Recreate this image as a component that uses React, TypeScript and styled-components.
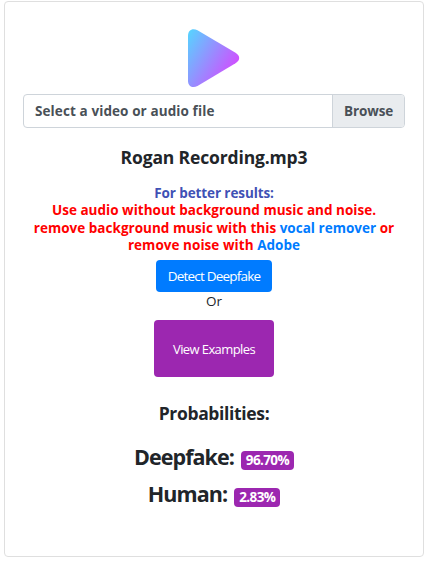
import React from "react";
import styled, { createGlobalStyle } from "styled-components";

const GlobalStyle = createGlobalStyle`
  *, *::before, *::after { box-sizing: border-box; }
  body {
    margin: 0;
    background: #fff;
    color: #212529;
    font-family: "Open Sans", "Noto Sans", sans-serif;
  }
`;

const Card = styled.main`
  width: 420px;
  height: 556px;
  margin: 1px 0 0 4px;
  padding: 27px 18px 0;
  border: 1px solid #dfdfdf;
  border-radius: 4px;
  display: flex;
  flex-direction: column;
  align-items: center;
  white-space: nowrap;
`;

const Logo = styled.svg`
  display: block;
  width: 52px;
  height: 59px;
  flex: none;
`;

const FilePicker = styled.label`
  display: flex;
  width: 382px;
  height: 34px;
  margin-top: 6px;
  border: 1px solid #ced4da;
  border-radius: 4px;
  overflow: hidden;
  color: #495057;
  font-size: 13.5px;
  font-weight: 700;
  line-height: 33px;
  letter-spacing: 0.1px;
`;

const FileName = styled.span`
  flex: 1;
  padding-left: 11px;
`;

const Browse = styled.span`
  width: 72px;
  padding-left: 11px;
  border-left: 1px solid #ced4da;
  background: #e9ecef;
  letter-spacing: -0.1px;
`;

const Title = styled.h2<{ $top: number; $spacing: number }>`
  margin: ${(p) => p.$top}px 0 0;
  font-size: 17.5px;
  font-weight: 700;
  line-height: 24px;
  letter-spacing: ${(p) => p.$spacing}px;
`;

const Tips = styled.div`
  margin-top: 16px;
  display: flex;
  flex-direction: column;
  align-items: center;
  color: #f00;
  font-size: 13.5px;
  font-weight: 700;
  line-height: 17.4px;
`;

const Tip = styled.span<{ $spacing: number }>`
  letter-spacing: ${(p) => p.$spacing}px;
`;

const TipHeading = styled(Tip)`
  color: #3f51b5;
`;

const Link = styled.a`
  color: #007bff;
  text-decoration: none;
`;

const Button = styled.button`
  display: flex;
  align-items: center;
  justify-content: center;
  flex: none;
  padding: 0;
  border: 0;
  border-radius: 4px;
  color: #fff;
  font: 400 13.5px "Open Sans", "Noto Sans", sans-serif;
`;

const DetectButton = styled(Button)`
  width: 116px;
  height: 32px;
  margin-top: 5.4px;
  background: #007bff;
  letter-spacing: -0.8px;
`;

const ExamplesButton = styled(Button)`
  width: 120px;
  height: 57px;
  margin-top: 9px;
  background: #9c27b0;
  font-size: 13px;
  letter-spacing: -0.6px;
`;

const Or = styled.span`
  font-size: 13.5px;
  line-height: 19px;
`;

const Result = styled.div<{ $top: number }>`
  display: flex;
  align-items: center;
  gap: 7px;
  height: 30px;
  margin-top: ${(p) => p.$top}px;
`;

const ResultLabel = styled.span<{ $spacing: number }>`
  font-size: 21.5px;
  font-weight: 700;
  line-height: 30px;
  letter-spacing: ${(p) => p.$spacing}px;
`;

const Badge = styled.span<{ $width: number }>`
  width: ${(p) => p.$width}px;
  height: 19px;
  margin-top: 6px;
  border-radius: 4px;
  background: #9c27b0;
  color: #fff;
  font-size: 13.5px;
  font-weight: 700;
  line-height: 19px;
  letter-spacing: -0.6px;
  text-align: center;
`;

export default function App() {
  return (
    <>
      <GlobalStyle />
      <Card>
        <Logo viewBox="0 0 52 59">
          <defs>
            <linearGradient id="play" gradientUnits="userSpaceOnUse" x1="0" y1="6" x2="49" y2="35">
              <stop offset="0" stopColor="#5ad0ff" />
              <stop offset="1" stopColor="#cf50ff" />
            </linearGradient>
          </defs>
          <path
            d="M0 6.5 C0 1 4.5 -1.4 9.5 1.2 L47.5 23.8 C52.4 26.8 52.4 31.2 47.5 34.3 L9.5 57 C4.5 59.8 0 57 0 51.7 Z"
            fill="url(#play)"
          />
        </Logo>
        <FilePicker>
          <FileName>Select a video or audio file</FileName>
          <Browse>Browse</Browse>
        </FilePicker>
        <Title $top={17} $spacing={-0.15}>Rogan Recording.mp3</Title>
        <Tips>
          <TipHeading $spacing={-0.1}>For better results:</TipHeading>
          <Tip $spacing={0.02}>Use audio without background music and noise.</Tip>
          <Tip $spacing={0.02}>
            remove background music with this <Link>vocal remover</Link> or
          </Tip>
          <Tip $spacing={0.05}>
            remove noise with <Link>Adobe</Link>
          </Tip>
        </Tips>
        <DetectButton>Detect Deepfake</DetectButton>
        <Or>Or</Or>
        <ExamplesButton>View Examples</ExamplesButton>
        <Title $top={24} $spacing={-0.35}>Probabilities:</Title>
        <Result $top={17}>
          <ResultLabel $spacing={-0.95}>Deepfake:</ResultLabel>
          <Badge $width={53}>96.70%</Badge>
        </Result>
        <Result $top={7}>
          <ResultLabel $spacing={-0.9}>Human:</ResultLabel>
          <Badge $width={46}>2.83%</Badge>
        </Result>
      </Card>
    </>
  );
}
